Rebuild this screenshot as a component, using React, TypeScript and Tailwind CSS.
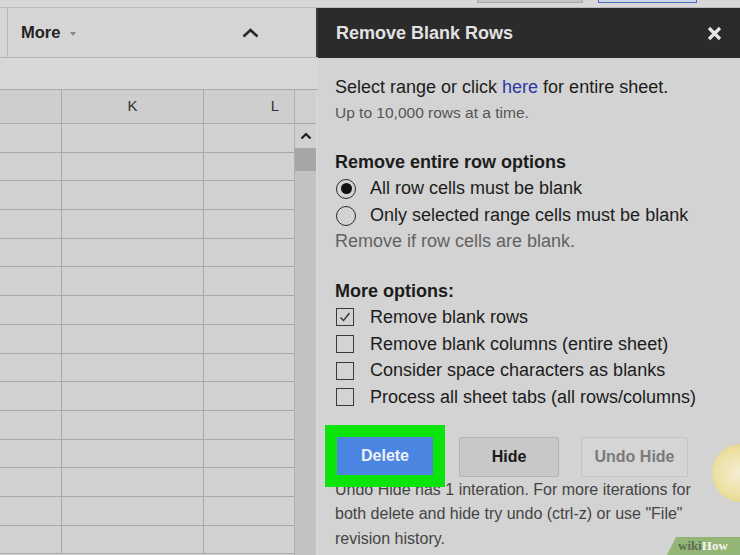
import React from 'react'

const rows = Array.from({ length: 15 }, (_, i) => i)

function Radio({ checked }: { checked?: boolean }) {
  return (
    <span className="w-[20px] h-[20px] rounded-full border-[1.5px] border-[#2a2a2a] flex items-center justify-center shrink-0">
      {checked && <span className="w-[11px] h-[11px] rounded-full bg-[#111]" />}
    </span>
  )
}

function Check({ checked }: { checked?: boolean }) {
  return (
    <span className="w-[18px] h-[18px] border-[1.5px] border-[#3a3a3a] flex items-center justify-center shrink-0">
      {checked && (
        <svg width="14" height="14" viewBox="0 0 14 14" fill="none">
          <polyline points="2.5,7.5 5.5,10.5 11.5,3" stroke="#333" strokeWidth="1.4" />
        </svg>
      )}
    </span>
  )
}

export default function App() {
  return (
    <div className="w-[740px] h-[555px] relative overflow-hidden flex flex-col bg-[#d3d3d3] font-['Liberation_Sans',Arial,sans-serif] text-[#1c1c1c]">
      {/* top strip with bottoms of the sheet toolbar buttons */}
      <div className="h-[8px] shrink-0 bg-[#d8d8d8] border-b border-[#bdbdbd] flex">
        <div className="ml-[477px] w-[106px] h-[3px] bg-[#c4c4c4] border-x border-b border-[#a9a9a9]" />
        <div className="ml-[15px] w-[99px] h-[3px] bg-[#cfd6e6] border-x border-b border-[#4b6fc4]" />
      </div>

      <div className="flex flex-1 min-h-0">
        {/* spreadsheet side */}
        <div className="w-[318px] shrink-0 flex flex-col">
          <div className="h-[50px] shrink-0 flex bg-[#d5d5d5] border-b border-[#b4b4b4]">
            <div className="ml-[7px] flex-1 border-l border-[#b9b9b9] flex items-center">
              <span className="ml-[13px] text-[16.5px] font-bold text-[#222]">More</span>
              <svg className="ml-[10px] mt-[2px]" width="6" height="4" viewBox="0 0 6 4">
                <polygon points="0,0 6,0 3,4" fill="#8a8a8a" />
              </svg>
              <svg className="ml-[166px]" width="17" height="10" viewBox="0 0 17 10" fill="none">
                <polyline points="1.5,8.5 8.5,2 15.5,8.5" stroke="#2a2a2a" strokeWidth="2.6" />
              </svg>
            </div>
            <div className="w-[2px] bg-[#3a3a3a]" />
          </div>
          <div className="h-[32px] shrink-0 bg-[#d8d8d8] border-b border-[#a9a9a9]" />

          <div className="flex flex-1 min-h-0">
            <div className="w-[294px] shrink-0 flex flex-col">
              <div className="h-[34px] shrink-0 flex bg-[#cecece] border-b border-[#a9a9a9] text-[15px] text-[#333]">
                <div className="w-[62px] border-r border-[#a9a9a9]" />
                <div className="w-[142px] border-r border-[#a9a9a9] flex items-center justify-center">K</div>
                <div className="flex-1 flex items-center justify-end pr-[15px]">L</div>
              </div>
              {rows.map(r => (
                <div key={r} className="h-[28.7px] shrink-0 flex bg-[#d2d2d2] border-b border-[#a9a9a9]">
                  <div className="w-[62px] border-r border-[#a9a9a9]" />
                  <div className="w-[142px] border-r border-[#a9a9a9]" />
                  <div className="flex-1" />
                </div>
              ))}
            </div>
            <div className="w-[22px] shrink-0 flex flex-col border-l border-[#b0b0b0]">
              <div className="h-[34px] shrink-0 bg-[#cfcfcf] border-b border-[#a9a9a9]" />
              <div className="h-[24px] shrink-0 bg-[#d0d0d0] flex items-center justify-center">
                <svg width="12" height="8" viewBox="0 0 12 8" fill="none">
                  <polyline points="1.5,6.5 6,2 10.5,6.5" stroke="#1e1e1e" strokeWidth="2.2" />
                </svg>
              </div>
              <div className="h-[23px] shrink-0 bg-[#a6a6a6]" />
              <div className="flex-1 bg-[#c2c2c2]" />
            </div>
            <div className="flex-1 bg-[#d6d6d6]" />
          </div>
        </div>

        {/* side panel */}
        <div className="w-[422px] shrink-0 flex flex-col">
          <div className="h-[50px] shrink-0 bg-[#2b2b2b] flex items-center justify-between pl-[18px] pr-[18px]">
            <span className="text-[18px] font-bold text-[#e2e2e2]">Remove Blank Rows</span>
            <svg width="15" height="15" viewBox="0 0 15 15">
              <path d="M2 2 L13 13 M13 2 L2 13" stroke="#e6e6e6" strokeWidth="3.2" />
            </svg>
          </div>

          <div className="relative flex-1 bg-[#d3d3d3] px-[17px] pt-[16px]">
            <p className="text-[18px] leading-[26px]">
              Select range or click <span className="text-[#2b3aa6]">here</span> for entire sheet.
            </p>
            <p className="text-[15.5px] leading-[26px] text-[#555]">Up to 10,000 rows at a time.</p>

            <h3 className="mt-[23px] text-[18px] font-bold leading-[26px]">Remove entire row options</h3>
            <label className="h-[27px] flex items-center gap-[14px] text-[18px] pl-[1px]">
              <Radio checked />
              All row cells must be blank
            </label>
            <label className="h-[27px] flex items-center gap-[14px] text-[18px] pl-[1px]">
              <Radio />
              Only selected range cells must be blank
            </label>
            <p className="text-[18px] leading-[24px] text-[#626262]">Remove if row cells are blank.</p>

            <h3 className="mt-[25px] text-[18px] font-bold leading-[26px]">More options:</h3>
            {[
              ['Remove blank rows', true],
              ['Remove blank columns (entire sheet)', false],
              ['Consider space characters as blanks', false],
              ['Process all sheet tabs (all rows/columns)', false],
            ].map(([label, on]) => (
              <label key={label as string} className="h-[26.7px] flex items-center gap-[16px] text-[18px] pl-[1px]">
                <Check checked={on as boolean} />
                {label as string}
              </label>
            ))}

            <div className="mt-[26px] flex items-start pl-[2px]">
              <div className="relative">
                <button className="w-[96px] h-[38px] bg-[#4b85e2] text-[16px] font-bold text-[#eef0f6]">Delete</button>
                <span className="absolute -inset-[12px] border-[12px] border-[#0be40b] z-10 pointer-events-none" />
              </div>
              <button className="ml-[26px] w-[100px] h-[40px] rounded-[2px] bg-[#c8c8c8] border border-[#b3b3b3] text-[16px] font-bold text-[#1a1a1a]">
                Hide
              </button>
              <button className="ml-[22px] w-[107px] h-[40px] rounded-[2px] bg-[#d5d5d5] border border-[#c3c3c3] text-[16px] font-bold text-[#7a7a7a]">
                Undo Hide
              </button>
            </div>

            <p className="mt-[1px] text-[16px] leading-[24.5px] text-[#444]">
              Undo Hide has 1 interation. For more iterations for
              <br />
              both delete and hide try undo (ctrl-z) or use "File"
              <br />
              revision history.
            </p>
          </div>
        </div>
      </div>

      {/* decorative overlays from the source picture */}
      <div className="absolute left-[712px] top-[444px] w-[58px] h-[58px] rounded-full bg-[radial-gradient(circle_at_45%_50%,#f3eed2_0%,#ece0a0_55%,#d6c060_100%)]" />
      <div className="absolute right-0 bottom-0 w-[73px] h-[18px]">
        <svg className="absolute inset-0" width="73" height="18" viewBox="0 0 73 18">
          <polygon points="9,0 73,0 73,18 0,18" fill="#93b676" />
        </svg>
        <span className="absolute left-[11px] top-[1px] text-[13px] font-bold leading-[16px] font-['Liberation_Serif',serif]">
          <span className="text-[#5f6a55]">wiki</span>
          <span className="text-[#f4f6ef]">How</span>
        </span>
      </div>
    </div>
  )
}
